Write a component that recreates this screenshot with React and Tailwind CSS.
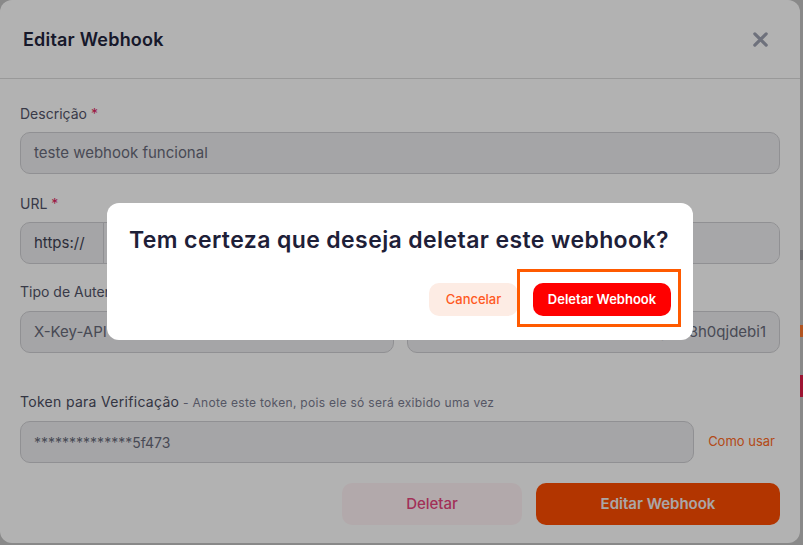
export default function App() {
  return (
    <div className="relative w-[803px] h-[545px] overflow-hidden bg-[#c4c4c4] font-['Inter','Noto_Sans',sans-serif]">
      <div className="flex h-full">
        <div className="w-[800px] h-[543px] shrink-0 rounded-xl bg-white flex flex-col">
          <div className="h-[79px] border-b border-[#dcdcdc] flex items-center justify-between pl-[23px] pr-[31px]">
            <h2 className="text-[18px] tracking-[0.2px] font-semibold text-[#22243d]">Editar Webhook</h2>
            <svg width="17" height="17" viewBox="0 0 24 24" fill="none" stroke="#9ea2b2" strokeWidth="4.5" strokeLinecap="round">
              <path d="M4 4L20 20M20 4L4 20" />
            </svg>
          </div>
          <div className="px-5 pt-[25px] flex flex-col">
            <label className="text-[14px] text-[#525468] leading-5">
              Descrição <span className="text-[#e0245e]">*</span>
            </label>
            <div className="mt-2 h-[42px] rounded-[10px] border border-[#cfcfd3] bg-[#ededef] flex items-center px-[13px] text-[15px] text-[#686a7a]">
              teste webhook funcional
            </div>
            <label className="mt-5 text-[14px] text-[#525468] leading-5">
              URL <span className="text-[#e0245e]">*</span>
            </label>
            <div className="mt-2 h-[42px] rounded-[10px] border border-[#cfcfd3] bg-[#ededef] flex overflow-hidden">
              <div className="w-[83px] border-r border-[#cfcfd3] flex items-center px-[13px] text-[15px] text-[#3f4254]">https://</div>
              <div className="flex-1 bg-[#f0f0f2] flex items-center px-3 text-[15px] text-[#686a7a]">webhook.site/exemplo</div>
            </div>
            <label className="mt-[18px] text-[14px] text-[#525468] leading-5">Tipo de Autenticação</label>
            <div className="mt-[9px] flex gap-[13px]">
              <div className="flex-1 h-[42px] rounded-[10px] border border-[#cfcfd3] bg-[#ededef] flex items-center px-[13px] text-[15px] text-[#686a7a]">X-Key-API</div>
              <div className="flex-1 h-[42px] rounded-[10px] border border-[#cfcfd3] bg-[#ededef] flex items-center justify-end overflow-hidden whitespace-nowrap px-[13px] text-[15px] text-[#686a7a]">
                a8f2kq9xj3p7zw1m4n6qv0yt5r8h0qjdebi1
              </div>
            </div>
            <div className="mt-[38px] leading-5 whitespace-nowrap">
              <span className="text-[14px] tracking-[0.3px] text-[#4a4c60]">Token para Verificação</span>
              <span className="text-[12px] tracking-[0.3px] text-[#7a7c90]"> - Anote este token, pois ele só será exibido uma vez</span>
            </div>
            <div className="mt-2 flex items-center gap-[14px] pr-[5px]">
              <div className="flex-1 h-[42px] rounded-[10px] border border-[#cfcfd3] bg-[#ededef] flex items-center px-[13px] text-[14px] text-[#686a7a]">
                **************5f473
              </div>
              <span className="text-[13px] text-[#ff6a25]">Como usar</span>
            </div>
            <div className="mt-5 flex justify-end gap-[14px]">
              <button className="w-[180px] h-[42px] rounded-[10px] bg-[#fff3f5] text-[15px] font-medium text-[#e8467f]">Deletar</button>
              <button className="w-[244px] h-[42px] rounded-[10px] bg-[#ff4d00] text-[15px] font-semibold text-[#f4eef0]">Editar Webhook</button>
            </div>
          </div>
        </div>
        <div className="flex-1 flex flex-col pt-[250px]">
          <div className="h-[10px] bg-[#9a9aa0]" />
          <div className="mt-[65px] h-[12px] bg-[#ff7a30]" />
          <div className="mt-[38px] h-[22px] bg-[#e11d48]" />
        </div>
      </div>

      <div className="absolute inset-0 bg-black/30 flex items-start justify-start pt-[203px] pl-[107px]">
        <div className="w-[586px] h-[137px] rounded-xl bg-white flex flex-col pl-[22px] pr-[22px] pt-[21px]">
          <h3 className="text-[23px] tracking-[0.4px] leading-8 font-semibold text-[#1e2038] whitespace-nowrap">Tem certeza que deseja deletar este webhook?</h3>
          <div className="mt-[27px] flex justify-end gap-[15px]">
            <button className="w-[89px] h-[33px] rounded-[10px] bg-[#fdece4] text-[13px] font-medium text-[#ff5a1f]">Cancelar</button>
            <span className="relative">
              <span className="absolute -left-[16px] -top-[14px] -right-[10px] -bottom-[11px] border-[3px] border-[#ff5a00]" />
              <button className="relative w-[138px] h-[33px] rounded-[10px] bg-[#ff0000] text-[13px] font-semibold text-white">Deletar Webhook</button>
            </span>
          </div>
        </div>
      </div>
    </div>
  );
}
